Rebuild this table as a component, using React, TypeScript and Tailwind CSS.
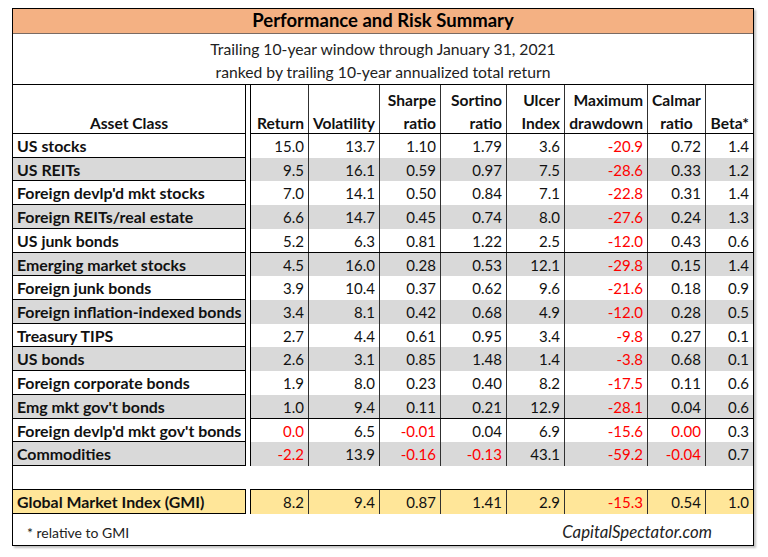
import React from "react";

type Row = string[];

const ROWS: Row[] = [
  ["US stocks", "15.0", "13.7", "1.10", "1.79", "3.6", "-20.9", "0.72", "1.4"],
  ["US REITs", "9.5", "16.1", "0.59", "0.97", "7.5", "-28.6", "0.33", "1.2"],
  ["Foreign devlp'd mkt stocks", "7.0", "14.1", "0.50", "0.84", "7.1", "-22.8", "0.31", "1.4"],
  ["Foreign REITs/real estate", "6.6", "14.7", "0.45", "0.74", "8.0", "-27.6", "0.24", "1.3"],
  ["US junk bonds", "5.2", "6.3", "0.81", "1.22", "2.5", "-12.0", "0.43", "0.6"],
  ["Emerging market stocks", "4.5", "16.0", "0.28", "0.53", "12.1", "-29.8", "0.15", "1.4"],
  ["Foreign junk bonds", "3.9", "10.4", "0.37", "0.62", "9.6", "-21.6", "0.18", "0.9"],
  ["Foreign inflation-indexed bonds", "3.4", "8.1", "0.42", "0.68", "4.9", "-12.0", "0.28", "0.5"],
  ["Treasury TIPS", "2.7", "4.4", "0.61", "0.95", "3.4", "-9.8", "0.27", "0.1"],
  ["US bonds", "2.6", "3.1", "0.85", "1.48", "1.4", "-3.8", "0.68", "0.1"],
  ["Foreign corporate bonds", "1.9", "8.0", "0.23", "0.40", "8.2", "-17.5", "0.11", "0.6"],
  ["Emg mkt gov't bonds", "1.0", "9.4", "0.11", "0.21", "12.9", "-28.1", "0.04", "0.6"],
  ["Foreign devlp'd mkt gov't bonds", "0.0", "6.5", "-0.01", "0.04", "6.9", "-15.6", "0.00", "0.3"],
  ["Commodities", "-2.2", "13.9", "-0.16", "-0.13", "43.1", "-59.2", "-0.04", "0.7"],
];

const GMI: Row = ["Global Market Index (GMI)", "8.2", "9.4", "0.87", "1.41", "2.9", "-15.3", "0.54", "1.0"];

// widths incl. right border, last column has none (outer frame)
const COLS = [
  { w: "w-[58px]", top: "", bottom: "Return", center: false },
  { w: "w-[71px]", top: "", bottom: "Volatility", center: false },
  { w: "w-[61px]", top: "Sharpe", bottom: "ratio", center: false },
  { w: "w-[66px]", top: "Sortino", bottom: "ratio", center: false },
  { w: "w-[58px]", top: "Ulcer", bottom: "Index", center: false },
  { w: "w-[83px]", top: "Maximum", bottom: "drawdown", center: false },
  { w: "w-[58px]", top: "Calmar", bottom: "ratio", center: true },
  { w: "w-[47px]", top: "", bottom: "Beta*", center: false },
];

function DataCells({ row, bg }: { row: Row; bg: string }) {
  return (
    <div className="flex border-l border-black">
      {row.slice(1).map((v, i) => {
        const red = parseFloat(v) <= 0;
        const last = i === COLS.length - 1;
        return (
          <div
            key={i}
            className={`${COLS[i].w} ${bg} ${last ? "" : "border-r border-[#303030]"} flex items-center justify-end pr-[4px] pt-[1px] ${
              red ? "text-[#ff0000]" : "text-[#111]"
            }`}
          >
            {v}
          </div>
        );
      })}
    </div>
  );
}

export default function App() {
  return (
    <div className="w-[768px] h-[557px] bg-white pt-[8px] pl-[12px] font-['Lato',sans-serif] text-[15px] text-[#111]">
      <div className="w-[742px] border border-black shadow-[2px_2px_2px_rgba(0,0,0,0.25)]">
        <div className="h-[25px] bg-[#f4b183] border-b border-[#7a6b63] flex items-center justify-center text-[18.5px] font-bold text-black">
          Performance and Risk Summary
        </div>
        <div className="h-[51px] border-b border-black pt-[4px] text-center text-[15.7px] leading-[23px] text-[#222]">
          <div>Trailing 10-year window through January 31, 2021</div>
          <div>ranked by trailing 10-year annualized total return</div>
        </div>

        {/* header */}
        <div className="flex h-[49px] font-bold text-[15.6px] leading-[23px]">
          <div className="w-[233px] border-r border-b border-black pt-[27px] text-center">Asset Class</div>
          <div className="w-[4px]" />
          <div className="flex border-l border-b border-black">
            {COLS.map((c, i) => (
              <div
                key={i}
                className={`${c.w} ${i === COLS.length - 1 ? "" : "border-r border-[#303030]"} pt-[4px] pr-[4px] flex flex-col whitespace-nowrap ${
                  c.center ? "items-center pl-[4px]" : "items-end"
                }`}
              >
                <span>{c.top || "\u00a0"}</span>
                <span>{c.bottom}</span>
              </div>
            ))}
          </div>
        </div>

        {/* body */}
        {ROWS.map((r, i) => {
          const bg = i % 2 === 1 ? "bg-[#d9d9d9]" : "bg-white";
          return (
            <div key={r[0]} className="flex h-[23.72px]">
              <div
                className={`w-[233px] ${bg} border-r border-b border-black flex items-center pl-[4px] pt-[1px] font-bold text-[15.9px] whitespace-nowrap`}
              >
                {r[0]}
              </div>
              <div className="w-[4px]" />
              <div className="border-b border-black">
                <DataCells row={r} bg={bg} />
              </div>
            </div>
          );
        })}

        <div className="h-[23px]" />

        <div className="flex h-[25px]">
          <div className="w-[233px] bg-[#ffe699] border-r border-y border-black flex items-center pl-[4px] pt-[1px] font-bold text-[15.9px]">
            {GMI[0]}
          </div>
          <div className="w-[4px]" />
          <div className="border-y border-black">
            <DataCells row={GMI} bg="bg-[#ffe699]" />
          </div>
        </div>

        <div className="h-[31px] flex items-end justify-between pb-[2px]">
          <div className="pl-[14px] text-[14px] leading-[20px] text-[#222]">* relative to GMI</div>
          <div className="pr-[41px] text-[16.8px] leading-[22px] italic text-[#222]">CapitalSpectator.com</div>
        </div>
      </div>
    </div>
  );
}
